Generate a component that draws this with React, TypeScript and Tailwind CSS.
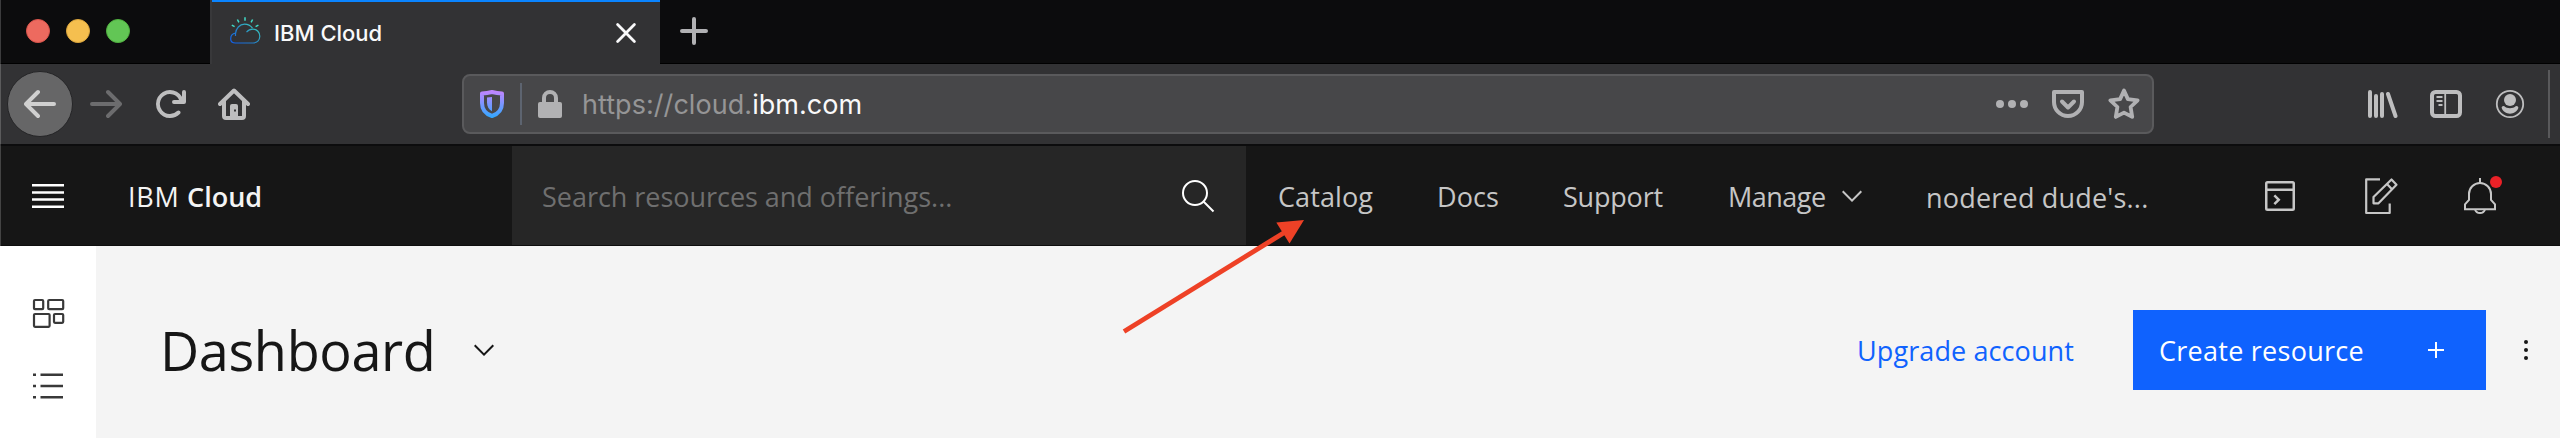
import type { ReactNode } from 'react';

type IconProps = { className?: string; children: ReactNode; box?: string };

function Icon({ className = '', children, box = '0 0 32 32' }: IconProps) {
  return (
    <svg viewBox={box} className={`shrink-0 ${className}`} fill="currentColor" aria-hidden="true">
      {children}
    </svg>
  );
}

function Chevron({ className = '' }: { className?: string }) {
  return (
    <Icon className={`size-8 ${className}`}>
      <path d="M16 22 6 12l1.4-1.4 8.6 8.6 8.6-8.6L26 12z" />
    </Icon>
  );
}

function CloudLogo() {
  return (
    <Icon className="ml-[17px] mt-[13px] size-8 self-start">
      <defs>
        <linearGradient id="cloud" x1="4" y1="30" x2="24" y2="4" gradientUnits="userSpaceOnUse">
          <stop offset="0" stopColor="#0f5ef0" />
          <stop offset="0.45" stopColor="#2580c4" />
          <stop offset="1" stopColor="#3ddbc0" />
        </linearGradient>
      </defs>
      <g fill="none" stroke="url(#cloud)" strokeWidth="1.2">
        <path d="M6.5 18.5C7 13.5 10.5 9.2 15.5 9.2c3.5 0 6 1.3 8 4" />
        <path d="M6.5 21v-2.800C3.200 18.600 1.700 21 1.700 24c0 2.600 2 4 4.800 4h17.500c4 0 6.800-2.800 6.800-6.700s-2.800-7.200-7-7.200c-3 0-5 1.500-6.300 3" />
      </g>
      <path
        d="M16 2.200v3.600M8.400 4.500l1.500 2.800M23.600 4.500l-1.500 2.800M2.800 10.200l2.800 1.400M29.400 10.200l-2.800 1.400"
        stroke="#42dcc8"
        strokeWidth="1.500"
      />
    </Icon>
  );
}

function TabStrip() {
  return (
    <div className="flex h-16 bg-[#0c0c0d]">
      <div className="flex w-[210px] gap-4 border-b border-black pl-[26px] pt-[19px]">
        <span className="size-6 rounded-full border border-[#d9544b] bg-[#ed6a5f]" />
        <span className="size-6 rounded-full border border-[#dba53c] bg-[#f5bf4f]" />
        <span className="size-6 rounded-full border border-[#50b13f] bg-[#62c655]" />
      </div>
      <div className="w-0.5 bg-[#38383a]" />
      <div className="flex w-[448px] items-center border-t-2 border-[#0a84ff] bg-[#323234]">
        <CloudLogo />
        <span className="ml-[13px] whitespace-nowrap font-['Inter'] text-[22px] font-medium leading-none text-[#f9f9fa]">
          IBM Cloud
        </span>
        <Icon className="ml-auto mr-[22px] size-6 text-[#f9f9fa]" box="0 0 24 24">
          <path d="M3.6 3.600l16.800 16.800M20.400 3.600L3.600 20.400" stroke="currentColor" strokeWidth="2.800" strokeLinecap="round" />
        </Icon>
      </div>
      <div className="flex flex-1 border-b border-black pl-[18px] pt-[15px]">
        <Icon className="size-8 text-[#b1b1b3]">
          <path d="M16 4v24M4 16h24" stroke="currentColor" strokeWidth="4" strokeLinecap="round" />
        </Icon>
      </div>
    </div>
  );
}

function AddressBar() {
  return (
    <div className="ml-[212px] flex h-[60px] w-[1692px] items-center rounded-lg border-2 border-[#5a5a5c] bg-[#474749]">
      <Icon className="ml-3 size-8">
        <defs>
          <linearGradient id="shield" x1="0" y1="4" x2="0" y2="30" gradientUnits="userSpaceOnUse">
            <stop offset="0" stopColor="#bd86ff" />
            <stop offset="1" stopColor="#2fa8ff" />
          </linearGradient>
        </defs>
        <path
          d="M16 4c-3.300.9-6.300 1.400-10 1.500V15c0 6.800 4.300 11.200 10 13 5.700-1.800 10-6.200 10-13V5.500C22.300 5.400 19.300 4.900 16 4z"
          fill="none"
          stroke="url(#shield)"
          strokeWidth="4"
          strokeLinejoin="round"
        />
        <path d="M11 9.600 16 9v14.200c-3.300-1.600-5-4.600-5-8.600z" fill="url(#shield)" />
      </Icon>
      <div className="ml-3 h-[42px] w-0.5 bg-[#5d6470]" />
      <Icon className="ml-3 size-8 text-[#b1b1b3]">
        <rect x="4" y="14" width="24" height="16" rx="2" />
        <path d="M10 15v-5a6 6 0 0 1 12 0v5" fill="none" stroke="currentColor" strokeWidth="4" />
      </Icon>
      <div className="ml-4 whitespace-nowrap pt-px font-['Inter'] text-[27px] leading-none tracking-[0.05px] text-[#959596]">
        https://cloud.<span className="text-[#f9f9fa]">ibm.com</span>
      </div>
      <div className="ml-auto mr-3 flex items-center gap-6 text-[#b1b1b3]">
        <Icon className="size-8">
          <circle cx="4" cy="16" r="4" />
          <circle cx="16" cy="16" r="4" />
          <circle cx="28" cy="16" r="4" />
        </Icon>
        <Icon className="size-8">
          <g fill="none" stroke="currentColor" strokeWidth="4" strokeLinejoin="round" strokeLinecap="round">
            <path d="M2 4h28v10a14 14 0 0 1-28 0z" />
            <path d="M10 13.500l6 6 6-6" />
          </g>
        </Icon>
        <Icon className="size-8">
          <path
            d="M16 2.600l3.900 8.500 9.700 1.200-7 6.700 1.600 9.900L16 24.600l-8.200 4.300L9.400 19l-7-6.700 9.700-1.200z"
            fill="none"
            stroke="currentColor"
            strokeWidth="3.800"
            strokeLinejoin="round"
          />
        </Icon>
      </div>
    </div>
  );
}

function Toolbar() {
  return (
    <div className="flex h-[82px] items-center border-b-2 border-[#0c0c0d] bg-[#323234] pl-[7px] text-[#bebebf]">
      <div className="flex size-[66px] items-center justify-center rounded-full border border-[#252527] bg-[#666667] text-[#d0d0d0]">
        <Icon className="size-8" box="0 0 16 16">
          <path d="M15 7H3.414l4.293-4.293a1 1 0 0 0-1.414-1.414l-6 6a1 1 0 0 0 0 1.414l6 6a1 1 0 0 0 1.414-1.414L3.414 9H15a1 1 0 0 0 0-2z" />
        </Icon>
      </div>
      <Icon className="ml-[17px] size-8 -scale-x-100 text-[#6c6c6e]" box="0 0 16 16">
        <path d="M15 7H3.414l4.293-4.293a1 1 0 0 0-1.414-1.414l-6 6a1 1 0 0 0 0 1.414l6 6a1 1 0 0 0 1.414-1.414L3.414 9H15a1 1 0 0 0 0-2z" />
      </Icon>
      <Icon className="ml-8 size-8" box="0 0 16 16">
        <path d="M15 1a1 1 0 0 0-1 1v2.418A6.995 6.995 0 1 0 8 15a6.954 6.954 0 0 0 4.950-2.050 1 1 0 0 0-1.414-1.414A5.019 5.019 0 1 1 12.549 6H10a1 1 0 0 0 0 2h5a1 1 0 0 0 1-1V2a1 1 0 0 0-1-1z" />
      </Icon>
      <Icon className="ml-8 size-8">
        <path
          d="M2 16L16 2.500 30 16M6 13.500V28a2 2 0 0 0 2 2h16a2 2 0 0 0 2-2V13.500"
          fill="none"
          stroke="currentColor"
          strokeWidth="4"
          strokeLinecap="round"
          strokeLinejoin="round"
        />
        <path d="M12 29V18a2 2 0 0 1 2-2h4a2 2 0 0 1 2 2v11z" />
        <rect x="16" y="21.500" width="2" height="2" fill="#323234" />
      </Icon>
      <AddressBar />
      <Icon className="ml-[212px] size-8">
        <path d="M4 4v24M10 8v20M16 6v22M22 6l7.500 22" stroke="currentColor" strokeWidth="4" strokeLinecap="round" />
      </Icon>
      <Icon className="ml-8 size-8">
        <rect x="2" y="4" width="28" height="24" rx="3.500" fill="none" stroke="currentColor" strokeWidth="4" />
        <path d="M15.200 4v24" stroke="currentColor" strokeWidth="1.800" />
        <path d="M6.500 9h6M6.500 13h6M8.500 17h4" stroke="currentColor" strokeWidth="2" />
      </Icon>
      <Icon className="ml-8 size-8">
        <circle cx="16" cy="16" r="13.200" fill="none" stroke="currentColor" strokeWidth="1.800" />
        <circle cx="16" cy="12" r="6" />
        <path d="M10 18c1.500 1.500 3.800 2.200 6 2.200s4.500-.7 6-2.200c1.400-.2 2.600.8 2.300 2-1 3.200-4.500 5.700-8.300 5.700S8.700 23.200 7.700 20c-.3-1.200.9-2.200 2.300-2z" />
      </Icon>
      <div className="ml-[22px] h-[68px] w-0.5 bg-[#59595b]" />
    </div>
  );
}

const navText = "whitespace-nowrap font-['Open_Sans'] text-[27px] leading-none";

function CloudHeader() {
  return (
    <header className="flex h-[100px] items-center border-b border-[#0e0e0e] bg-[#161616] text-[#c6c6c6]">
      <Icon className="ml-8 size-8 text-white">
        <path d="M0 5.200h32M0 12.400h32M0 19.500h32M0 26.700h32" stroke="currentColor" strokeWidth="2.500" />
      </Icon>
      <div className={`${navText} ml-16 w-[384px] pt-px text-[#f4f4f4]`}>
        <span className="tracking-[0.7px]">IBM </span>
        <span className="font-semibold">Cloud</span>
      </div>
      <div className="flex h-[99px] w-[734px] items-center justify-between bg-[#262626] pl-[30px] pr-7">
        <span className={`${navText} pt-px tracking-[-0.03px] text-[#6f6f6f]`}>Search resources and offerings...</span>
        <Icon className="size-10 text-white" box="0 0 40 40">
          <g fill="none" stroke="currentColor" strokeWidth="2">
            <circle cx="17" cy="17" r="12" />
            <path d="M25.500 25.500l10 10" />
          </g>
        </Icon>
      </div>
      <span className={`${navText} ml-8 w-[159px] pt-px tracking-[0.1px]`}>Catalog</span>
      <span className={`${navText} w-[126px] pt-px tracking-[0.1px]`}>Docs</span>
      <span className={`${navText} w-[165px] pt-px tracking-[-0.2px]`}>Support</span>
      <span className={`${navText} w-[108px] pt-px tracking-[-0.5px]`}>Manage</span>
      <Chevron />
      <span className={`${navText} ml-[58px] w-[334px] pt-[3px] tracking-[0.2px]`}>nodered dude's...</span>
      <Icon className="size-10">
        <path d="M26 4H6a2 2 0 0 0-2 2v20a2 2 0 0 0 2 2h20a2 2 0 0 0 2-2V6a2 2 0 0 0-2-2zm0 2v4H6V6zM6 26V12h20v14z" />
        <path d="M10.760 16.180L13.580 19l-2.820 2.840 1.410 1.410L16.410 19l-4.240-4.230z" />
      </Icon>
      <Icon className="ml-[60px] size-10" box="0 0 40 40">
        <g fill="none" stroke="currentColor" strokeWidth="2.200" strokeLinejoin="round">
          <path d="M20 3.300H6.200V37h23.500V27.500" />
          <path d="M13.500 27.300V21L31.500 3.500l5 5.200L18.500 27.300z" />
          <path d="M27 8l5 5.200" />
        </g>
      </Icon>
      <div className="relative ml-[60px] size-10">
        <Icon className="size-10" box="0 0 40 40">
          <g fill="none" stroke="currentColor" strokeWidth="2">
            <path d="M20 2v5" />
            <path d="M5 33.300v-5l4-4.500V18a11 11 0 0 1 22 0v5.800l4 4.500v5z" />
            <path d="M15 33.500c.8 2.400 2.600 3.500 5 3.500s4.200-1.100 5-3.500" />
          </g>
        </Icon>
        <span className="absolute left-[30px] top-0 size-3 rounded-full bg-[#ea2127]" />
      </div>
    </header>
  );
}

function SideRail() {
  return (
    <aside className="flex w-24 flex-col items-center bg-white pt-[47px] text-[#393939]">
      <Icon className="ml-px size-10" box="0 0 40 40">
        <g fill="none" stroke="currentColor" strokeWidth="2.200">
          <rect x="5" y="7" width="9.200" height="9.200" rx="1" />
          <rect x="19.200" y="7" width="15" height="9.200" rx="1" />
          <rect x="5" y="21" width="15.600" height="12.800" rx="1" />
          <rect x="25" y="21" width="9.200" height="8.800" rx="1" />
        </g>
      </Icon>
      <Icon className="ml-px mt-[33px] size-10" box="0 0 40 40">
        <path
          d="M4 8.700h3M11.500 8.700H34M4 20h3M11.500 20H34M4 31.300h3M11.500 31.300H34"
          stroke="currentColor"
          strokeWidth="2.400"
        />
      </Icon>
    </aside>
  );
}

function DashboardBar() {
  return (
    <div className="flex h-[192px] bg-[#f4f4f4] text-[#161616]">
      <SideRail />
      <div className="flex h-[208px] flex-1 items-center">
        <h1 className="ml-16 w-[308px] whitespace-nowrap font-['Open_Sans'] text-[54px] font-normal leading-none tracking-[-0.350px]">
          Dashboard
        </h1>
        <Chevron />
        <a className={`${navText} ml-auto pt-px tracking-[0.1px] text-[#0f62fe]`}>Upgrade account</a>
        <button className="ml-[59px] flex h-20 w-[353px] items-center justify-between bg-[#0f62fe] pl-[26px] pr-[34px] text-white">
          <span className={`${navText} pt-px tracking-[0.260px]`}>Create resource</span>
          <Icon className="size-8">
            <path d="M17 15V8h-2v7H8v2h7v7h2v-7h7v-2z" />
          </Icon>
        </button>
        <Icon className="ml-6 mr-[18px] size-8">
          <circle cx="16" cy="8" r="2" />
          <circle cx="16" cy="16" r="2" />
          <circle cx="16" cy="24" r="2" />
        </Icon>
      </div>
    </div>
  );
}

function PointerArrow() {
  return (
    <svg viewBox="0 0 190 120" className="pointer-events-none absolute left-[1120px] top-[216px] h-[120px] w-[190px]" aria-hidden="true">
      <path d="M4 115.500L166 15.500" stroke="#ee4126" strokeWidth="4.800" />
      <path d="M184 4l-27.700 2.500L169.500 27.500z" fill="#ee4126" />
    </svg>
  );
}

export default function App() {
  return (
    <div className="relative h-[438px] w-[2560px] overflow-hidden">
      <TabStrip />
      <Toolbar />
      <CloudHeader />
      <DashboardBar />
      <PointerArrow />
      <div className="absolute left-0 top-0 h-[246px] w-px bg-white/20" />
    </div>
  );
}
